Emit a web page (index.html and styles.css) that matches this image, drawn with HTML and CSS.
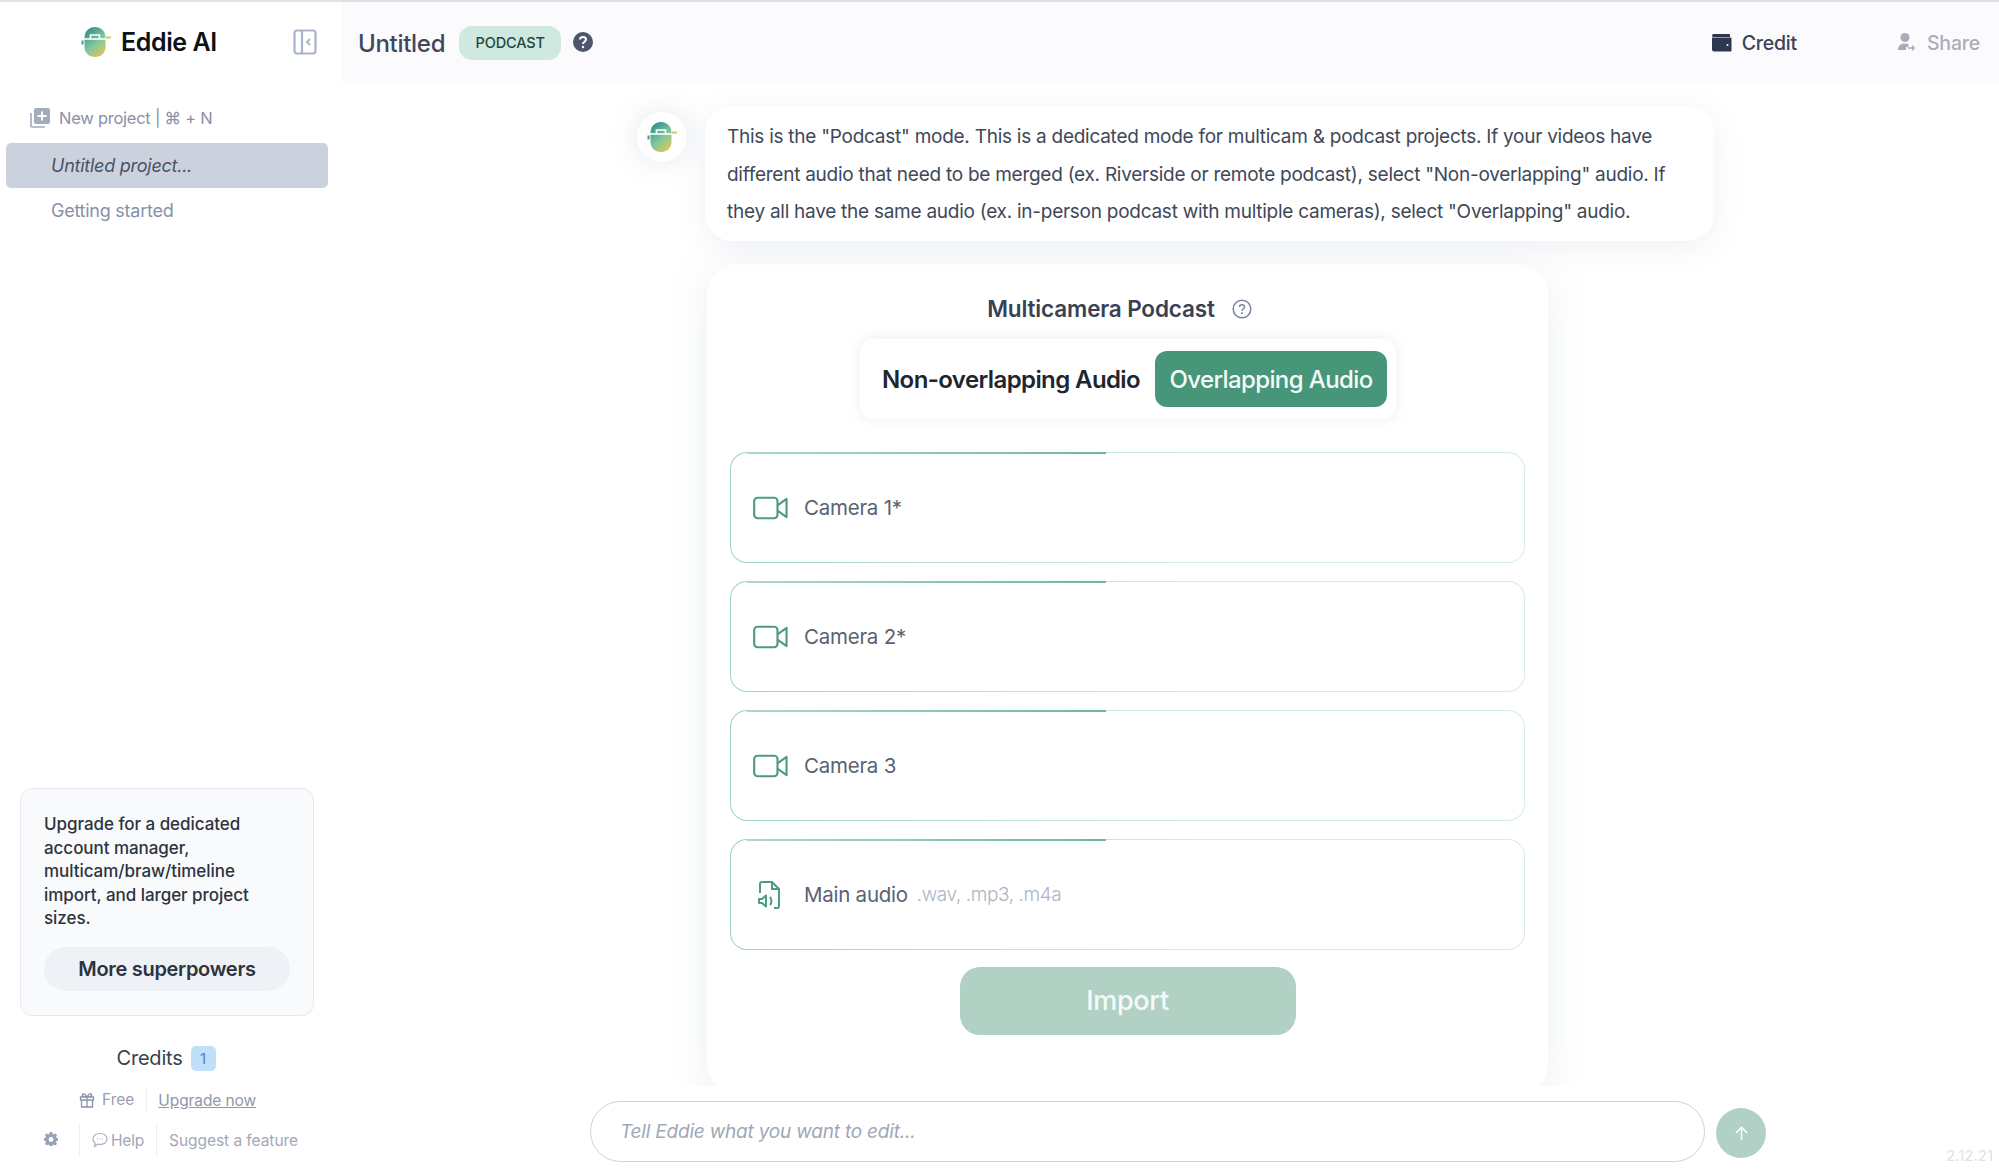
FILE: index.html
```html
<!DOCTYPE html>
<html lang="en">
<head>
<meta charset="utf-8">
<title>Eddie AI</title>
<link rel="stylesheet" href="styles.css">
</head>
<body>
<svg class="defs" width="0" height="0" aria-hidden="true">
  <defs>
    <linearGradient id="lg" x1="0.2" y1="0" x2="0.8" y2="1">
      <stop offset="0" stop-color="#2f8f8c"/>
      <stop offset="0.55" stop-color="#7fc8a0"/>
      <stop offset="1" stop-color="#e3c457"/>
    </linearGradient>
    <symbol id="logo" viewBox="0 0 30 32">
      <path d="M3.500 12C3.500 5 8 1 14 1s10.500 4 10.500 11v9c0 6-4.500 10-10.500 10S3.500 27 3.500 21z" fill="url(#lg)"/>
      <path d="M1 13h26" stroke="#fff" stroke-width="1.6"/>
      <path d="M9.500 13V9h9v4" fill="none" stroke="#fff" stroke-width="1.6"/>
      <path d="M25 11.500h5" stroke="#c9cf6a" stroke-width="2"/>
      <path d="M1.500 14.500v4" stroke="#3f9c92" stroke-width="2"/>
    </symbol>
    <symbol id="cam" viewBox="0 0 36 24">
      <rect x="1.200" y="1.500" width="24" height="21" rx="3.500" fill="none" stroke="currentColor" stroke-width="2.200"/>
      <path d="M25.500 9 34.500 2.500v19l-9-6.500" fill="none" stroke="currentColor" stroke-width="2.200" stroke-linejoin="round"/>
    </symbol>
  </defs>
</svg>
<div class="app">
  <aside class="sidebar">
    <div class="brand">
      <svg class="brand-logo"><use href="#logo"/></svg>
      <span class="brand-name">Eddie AI</span>
      <svg class="collapse" viewBox="0 0 24 26"><rect x="1.500" y="1.500" width="21" height="23" rx="2.500" fill="none" stroke="#a9b3c7" stroke-width="2.200"/><path d="M9 2v22" stroke="#a9b3c7" stroke-width="2.200"/><path d="M17 10l-3 3 3 3" fill="none" stroke="#a9b3c7" stroke-width="1.800"/></svg>
    </div>
    <div class="new-project">
      <svg class="np-icon" viewBox="0 0 20 20"><path d="M1 5v13a1 1 0 0 0 1 1h13" fill="none" stroke="#a3acbf" stroke-width="1.600"/><rect x="4" y="0" width="16" height="16" rx="2" fill="#a3acbf"/><path d="M12 3.500v9M7.500 8h9" stroke="#fff" stroke-width="2"/></svg>
      <span>New project | ⌘ + N</span>
    </div>
    <div class="proj active">Untitled project...</div>
    <div class="proj">Getting started</div>
    <div class="spacer"></div>
    <div class="upgrade">
      <p class="upgrade-text">Upgrade for a dedicated account manager, multicam/braw/timeline import, and larger project sizes.</p>
      <div class="super">More superpowers</div>
    </div>
    <div class="credits"><span>Credits</span><span class="credit-badge">1</span></div>
    <div class="plan">
      <svg class="small-icon" viewBox="0 0 16 16"><path d="M1.500 5h13v3h-13zM2.500 8v7h11V8M8 5v10M8 5C6 1 2.500 1 3.500 3.500 4 5 8 5 8 5c0 0 4 0 4.500-1.500C13.500 1 10 1 8 5z" fill="none" stroke="#8a93a8" stroke-width="1.300"/></svg>
      <span class="free">Free</span>
      <span class="upnow">Upgrade now</span>
    </div>
    <div class="help-row">
      <svg class="gear" viewBox="0 0 16 16"><path fill="#9aa3b5" fill-rule="evenodd" d="M6.500 0h3l.4 2.200 1.300.6L13 1.500l2 2-1.300 1.800.6 1.300 2.200.4v3l-2.200.4-.6 1.300 1.300 1.800-2 2-1.800-1.300-1.300.6-.4 2.200h-3l-.4-2.200-1.300-.6L3 15.500l-2-2 1.300-1.800-.6-1.300L0 10V7l1.700-.4.6-1.300L1 3.500l2-2 1.800 1.300 1.300-.6zM8 5.700a2.800 2.800 0 1 0 0 5.600 2.800 2.800 0 0 0 0-5.600z"/></svg>
      <span class="help"><svg class="chat" viewBox="0 0 16 16"><path d="M8 1.500c4 0 7 2.400 7 5.500s-3 5.500-7 5.500c-.8 0-1.500-.1-2.200-.3L2.500 14.500l.7-3.200C1.800 10.300 1 8.800 1 7c0-3.100 3-5.500 7-5.500z" fill="none" stroke="#a9b1c1" stroke-width="1.200"/><path d="M5 7h1M7.500 7h1M10 7h1" stroke="#a9b1c1" stroke-width="1.200"/></svg>Help</span>
      <span class="suggest">Suggest a feature</span>
    </div>
  </aside>
  <main class="main">
    <header class="topbar">
      <span class="title">Untitled</span>
      <span class="mode">PODCAST</span>
      <svg class="q" viewBox="0 0 20 20"><circle cx="10" cy="10" r="10" fill="#4f566b"/><path d="M7 7.500C7 5.700 8.300 5 10 5s3 1 3 2.500c0 2.300-3 2.200-3 4.500" fill="none" stroke="#fff" stroke-width="2"/><circle cx="10" cy="15" r="1.200" fill="#fff"/></svg>
      <span class="top-right">
        <span class="credit-btn"><svg class="wallet" viewBox="0 0 20 18"><path d="M2 0h15a1 1 0 0 1 1 1v2H1.500C.7 3 0 2.300 0 1.500S.9 0 2 0z" fill="#2e3650"/><path d="M0 3.500h18.500a1 1 0 0 1 1 1V16.500a1 1 0 0 1-1 1H2a2 2 0 0 1-2-2z" fill="#2e3650"/><circle cx="15.500" cy="11" r="1" fill="#fff"/></svg>Credit</span>
        <span class="share-btn"><svg class="share-ic" viewBox="0 0 17 18"><circle cx="7" cy="4.500" r="4.500" fill="#a9acb8"/><path d="M0 17c0-4 2.500-6.500 7-6.500 1.500 0 2.600.3 3.500.8V14H8v3z" fill="#a9acb8"/><path d="M10 15h6M14 12.800l2.300 2.200-2.300 2.200" fill="none" stroke="#a9acb8" stroke-width="1.400"/></svg>Share</span>
      </span>
    </header>
    <div class="chat-area">
      <div class="msg">
        <div class="avatar"><svg class="avatar-logo"><use href="#logo"/></svg></div>
        <div class="bubble">This is the "Podcast" mode. This is a dedicated mode for multicam &amp; podcast projects. If your videos have<br>different audio that need to be merged (ex. Riverside or remote podcast), select "Non-overlapping" audio. If<br>they all have the same audio (ex. in-person podcast with multiple cameras), select "Overlapping" audio.</div>
      </div>
      <section class="card">
        <h2 class="card-title">Multicamera Podcast<svg class="info" viewBox="0 0 20 20"><circle cx="10" cy="10" r="8.800" fill="none" stroke="#78839c" stroke-width="1.500"/><path d="M7.500 8c0-1.500 1-2.300 2.500-2.300s2.500.9 2.500 2.200c0 2-2.500 1.900-2.500 3.800" fill="none" stroke="#78839c" stroke-width="1.500"/><circle cx="10" cy="14.300" r="1" fill="#78839c"/></svg></h2>
        <div class="toggle">
          <span class="seg">Non-overlapping Audio</span>
          <span class="seg on">Overlapping Audio</span>
        </div>
        <div class="drops">
          <div class="drop"><svg class="cam"><use href="#cam"/></svg><span class="label">Camera 1*</span></div>
          <div class="drop"><svg class="cam"><use href="#cam"/></svg><span class="label">Camera 2*</span></div>
          <div class="drop"><svg class="cam"><use href="#cam"/></svg><span class="label">Camera 3</span></div>
          <div class="drop"><span class="audio-wrap"><svg class="audio" viewBox="0 0 24 28"><path d="M3 12V3a2 2 0 0 1 2-2h10l7 7v17a2 2 0 0 1-2 2h-3M15 1v7h7" fill="none" stroke="currentColor" stroke-width="2"/><path d="M2 18h3l4-3.500v11L5 22H2z" fill="none" stroke="currentColor" stroke-width="2" stroke-linejoin="round"/><path d="M13 16c2 2 2 6 0 8" fill="none" stroke="currentColor" stroke-width="2"/></svg></span><span class="label">Main audio</span><span class="ext">.wav, .mp3, .m4a</span></div>
        </div>
        <div class="import">Import</div>
      </section>
    </div>
    <div class="composer">
      <div class="input">Tell Eddie what you want to edit...</div>
      <div class="send"><svg class="send-ic" viewBox="0 0 16 16"><path d="M8 15V1.500M2 7.500l6-6 6 6" fill="none" stroke="#fff" stroke-width="1.600"/></svg></div>
      <span class="version">2.12.21</span>
    </div>
  </main>
</div>
</body>
</html>
```

FILE: styles.css
```css
* { box-sizing: border-box; }
html, body { margin: 0; height: 100%; }
body { font-family: "Inter", "Liberation Sans", sans-serif; background: #fff; color: #3f4759; overflow: hidden; }
.defs { position: absolute; }
.app { display: flex; height: 1170px; border-top: 2px solid #dfe1e5; }
.sidebar { width: 342px; flex: none; display: flex; flex-direction: column; background: #fff; }
.brand { height: 82px; display: flex; align-items: center; padding-left: 81px; }
.brand-logo { width: 30px; height: 32px; margin-top: -2px; flex: none; }
.brand-name { margin-left: 10px; font-size: 25px; font-weight: 600; color: #0e1116; letter-spacing: -.4px; width: 172px; margin-top: -2px; flex: none; }
.collapse { width: 24px; height: 26px; margin-top: -2px; flex: none; }
.new-project { display: flex; align-items: center; margin: 23px 0 0 30px; height: 22px; font-size: 16.500px; color: #8891a6; letter-spacing: -.25px; }
.np-icon { width: 20px; height: 20px; margin-right: 9px; margin-top: -1px; }
.proj { margin: 0 0 0 6px; width: 322px; height: 45px; line-height: 46px; padding-left: 45px; font-size: 18px; color: #8891a6; letter-spacing: -.25px; }
.proj.active { margin-top: 14px; background: #cbd2de; border-radius: 5px; font-style: italic; color: #4a5263; }
.spacer { flex: 1; }
.upgrade { margin-left: 20px; width: 294px; height: 228px; padding: 24px 23px 0; background: #f8fafc; border: 1.500px solid #e6e9f1; border-radius: 12px; }
.upgrade-text { margin: 0; font-size: 17px; line-height: 23.500px; font-weight: 500; color: #2d3340; letter-spacing: -.05px; width: 246px; }
.super { margin-top: 16px; height: 44px; width: 246px; border-radius: 22px; background: #eef1f5; text-align: center; line-height: 44px; font-size: 20px; font-weight: 600; color: #2d3340; letter-spacing: -.3px; }
.credits { display: flex; justify-content: center; align-items: center; gap: 8px; margin: 29px 0 0 -1px; height: 26px; font-size: 20px; color: #3a4150; letter-spacing: -.2px; width: 334px; }
.credit-badge { width: 25px; height: 25px; border-radius: 5px; background: #bfe0f8; color: #4d82d4; font-size: 15px; text-align: center; line-height: 25px; }
.plan { display: flex; align-items: center; margin: 17px 0 0 79px; height: 24px; font-size: 15.500px; color: #98a0b2; }
.small-icon { width: 16px; height: 16px; margin-right: 7px; }
.free { padding-right: 12px; border-right: 1.500px solid #eceef2; line-height: 24px; }
.upnow { margin-left: 11px; text-decoration: underline; letter-spacing: -.1px; color: #8e97ab; }
.help-row { display: flex; align-items: center; margin: 11px 0 13px 44px; height: 34px; font-size: 15.500px; color: #a0a8b9; }
.gear { width: 14px; height: 14px; margin-right: 21px; margin-top: -2px; }
.help { display: flex; align-items: center; height: 34px; padding: 0 12px 0 12px; border-left: 1.500px solid #eceef2; border-right: 1.500px solid #eceef2; letter-spacing: -.2px; }
.chat { width: 16px; height: 16px; margin-right: 3px; }
.suggest { margin-left: 12px; letter-spacing: -.05px; }
.main { flex: 1; min-width: 0; display: flex; flex-direction: column; }
.topbar { height: 82px; flex: none; display: flex; align-items: center; padding: 0 19px 0 16px; background: #fbfbfe; }
.title { font-size: 24px; font-weight: 500; color: #3f4759; letter-spacing: -.3px; }
.mode { margin-left: 14px; width: 102px; height: 34px; border-radius: 13px; background: #cfe8e0; color: #1f4a3c; font-size: 14.500px; font-weight: 500; line-height: 34px; text-align: center; letter-spacing: -.1px; margin-top: -1px; }
.q { width: 20px; height: 20px; margin-left: 12px; margin-top: -2px; }
.top-right { margin-left: auto; display: flex; align-items: center; }
.credit-btn { display: flex; align-items: center; font-size: 19.500px; font-weight: 500; color: #3a4256; letter-spacing: -.2px; margin-right: 101px; }
.wallet { width: 20px; height: 18px; margin-right: 10px; margin-left: -1px; }
.share-btn { display: flex; align-items: center; font-size: 19.500px; font-weight: 500; color: #aaadb8; letter-spacing: -.2px; }
.share-ic { width: 17px; height: 18px; margin-right: 12px; margin-top: -2px; }
.chat-area { height: 1002px; flex: none; overflow: hidden; padding: 22px 0 0 295px; }
.msg { display: flex; align-items: flex-start; gap: 18px; }
.avatar { width: 50px; height: 50px; margin-top: 6px; border-radius: 50%; background: #fff; box-shadow: 0 0 28px rgba(165,178,200,.3); display: flex; align-items: center; justify-content: center; flex: none; }
.avatar-logo { width: 30px; height: 32px; }
.bubble { width: 1009px; height: 135px; padding: 12px 22px 0; background: #fff; border-radius: 27px; font-size: 19px; line-height: 37.500px; color: #404858; white-space: nowrap; letter-spacing: -.26px; box-shadow: 0 6px 30px rgba(165,178,200,.2); }
.card { width: 841px; height: 830px; margin: 23px 0 0 70px; padding: 29px 22px 0; background: #fff; border-radius: 30px; box-shadow: 0 8px 40px rgba(165,178,200,.22); display: flex; flex-direction: column; align-items: center; }
.card-title { margin: 0; font-size: 22.500px; font-weight: 600; height: 32px; line-height: 32px; color: #3a4252; letter-spacing: -.15px; display: flex; align-items: center; margin-left: -16px; }
.info { width: 20px; height: 20px; margin-left: 17px; }
.toggle { display: flex; align-items: center; margin-top: 14px; margin-left: 1px; width: 536px; height: 80px; padding: 0 9px 0 22px; background: #fff; border-radius: 14px; box-shadow: 0 0 14px rgba(165,178,200,.22); }
.seg { font-size: 24px; font-weight: 600; color: #20252f; letter-spacing: -.6px; white-space: nowrap; }
.seg.on { margin-left: auto; width: 232px; height: 56px; line-height: 57px; border-radius: 12px; background: #489679; color: #f4faf7; text-align: center; font-weight: 500; }
.drops { width: 795px; margin-top: 33px; display: flex; flex-direction: column; gap: 18px; }
.drop { position: relative; display: flex; align-items: center; height: 111px; padding-left: 22px; border: 1.500px solid transparent; border-radius: 17px; background: linear-gradient(#fff, #fff) padding-box, linear-gradient(90deg, #9dd4c0, #d5ece4 60%, #d5ece4) border-box; }
.drop::before { content: ""; position: absolute; left: 16px; top: -1.500px; width: 359px; height: 2px; background: linear-gradient(90deg, #a9dac8, #6fb79f); }
.cam { width: 35px; height: 24px; color: #4d9b80; flex: none; }
.audio-wrap { width: 35px; display: flex; padding-left: 4px; flex: none; }
.audio { width: 24px; height: 28px; color: #4d9b80; }
.label { margin-left: 16px; font-size: 20.500px; color: #5a6272; letter-spacing: -.25px; }
.ext { margin-left: 9px; font-size: 19px; font-weight: 300; color: #aeb4c4; letter-spacing: -.4px; }
.import { margin-top: 17px; width: 336px; height: 68px; line-height: 68px; border-radius: 20px; background: #b1d1c5; color: #f5faf8; font-size: 27px; font-weight: 500; text-align: center; letter-spacing: -.3px; flex: none; }
.composer { height: 84px; flex: none; display: flex; align-items: flex-start; padding: 15px 0 0 248px; position: relative; }
.input { width: 1115px; height: 61px; border: 1.500px solid #ccd2e2; border-radius: 31px; padding-left: 29px; line-height: 60px; font-size: 19px; font-style: italic; color: #9ea7b9; letter-spacing: -.2px; }
.send { width: 50px; height: 50px; margin: 7px 0 0 11px; border-radius: 50%; background: #b1d1c5; display: flex; align-items: center; justify-content: center; }
.send-ic { width: 15px; height: 15px; }
.version { position: absolute; right: 6px; bottom: 5px; font-size: 15px; color: #dfe2ea; }
```
